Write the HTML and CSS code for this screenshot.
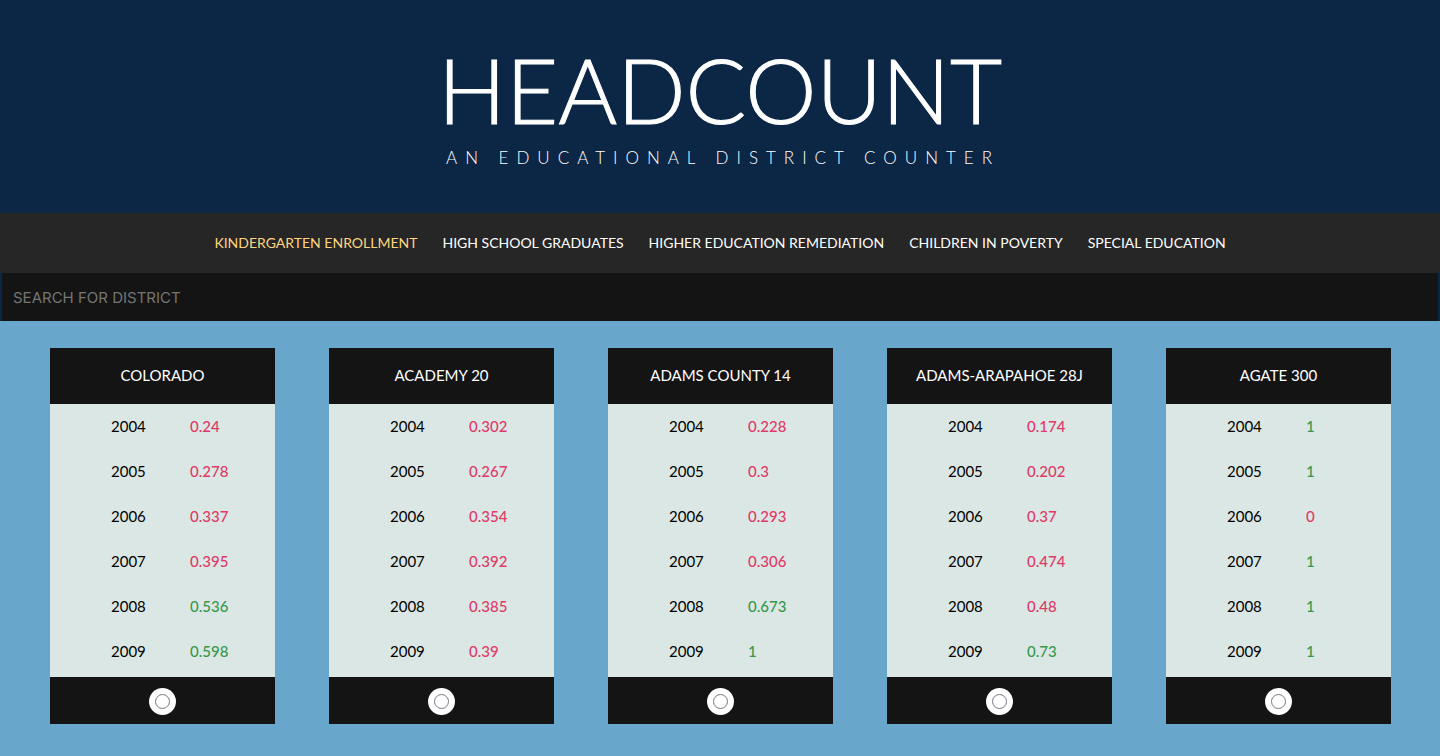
FILE: index.html
```html
<!DOCTYPE html>
<html lang="en">
<head>
<meta charset="utf-8">
<title>Headcount</title>
<link rel="stylesheet" href="styles.css">
</head>
<body>
<header class="hero">
  <div class="brand">
    <h1 class="title">HEADCOUNT</h1>
    <p class="tagline">AN EDUCATIONAL DISTRICT COUNTER</p>
  </div>
</header>
<nav class="nav">
  <button class="tab active" type="button">KINDERGARTEN ENROLLMENT</button>
  <button class="tab" type="button">HIGH SCHOOL GRADUATES</button>
  <button class="tab" type="button">HIGHER EDUCATION REMEDIATION</button>
  <button class="tab" type="button">CHILDREN IN POVERTY</button>
  <button class="tab" type="button">SPECIAL EDUCATION</button>
</nav>
<form class="search"><input class="field" type="text" aria-label="Search for district" placeholder="SEARCH FOR DISTRICT"></form>
<main class="cards" id="cards"></main>
<script src="app.js"></script>
</body>
</html>
```
FILE: app.js
```js
const districts = [
  ["COLORADO", [0.24, 0.278, 0.337, 0.395, 0.536, 0.598]],
  ["ACADEMY 20", [0.302, 0.267, 0.354, 0.392, 0.385, 0.39]],
  ["ADAMS COUNTY 14", [0.228, 0.3, 0.293, 0.306, 0.673, 1]],
  ["ADAMS-ARAPAHOE 28J", [0.174, 0.202, 0.37, 0.474, 0.48, 0.73]],
  ["AGATE 300", [1, 1, 0, 1, 1, 1]]
];
document.getElementById("cards").innerHTML = districts.map(([name, values]) => `
  <article class="card">
    <h2 class="name">${name}</h2>
    <table class="data"><tbody>${values.map((v, i) => `
      <tr><th scope="row">${2004 + i}</th><td class="${v >= 0.5 ? "high" : "low"}">${v}</td></tr>`).join("")}
    </tbody></table>
    <div class="foot"><button class="pick" type="button" aria-label="Compare ${name}"></button></div>
  </article>`).join("");
```
FILE: styles.css
```css
* { box-sizing: border-box; }
body {
  margin: 0;
  min-height: 100vh;
  background: #69a6cb;
  font-family: Lato, "Liberation Sans", sans-serif;
}
.hero {
  display: flex;
  justify-content: center;
  padding: 34px 0 41px;
  background: #0c2646;
  color: #fff;
}
.title {
  margin: 0;
  font-size: 90px;
  line-height: 110px;
  font-weight: 300;
  text-align: center;
  -webkit-text-stroke: 1px #fff;
}
.tagline {
  margin: 0;
  padding-left: 8px;
  font-size: 17px;
  line-height: 28px;
  letter-spacing: 8px;
  font-weight: 300;
}
.nav {
  display: flex;
  flex-wrap: wrap;
  justify-content: center;
  gap: 25px;
  padding: 18px;
  background: #262626;
}
.tab {
  padding: 0;
  border: 0;
  background: none;
  color: #fff;
  font: 14px/24px Lato, sans-serif;
}
.tab.active { color: #ffd47f; }
.search { padding: 0 2px; background: #0c2646; }
.field {
  display: block;
  width: 100%;
  height: 48px;
  padding: 0 11px;
  border: 0;
  background: #141414;
  color: #fff;
  font: 15px/24px Inter, sans-serif;
}
.field::placeholder { color: #757575; }
.cards {
  display: flex;
  flex-wrap: wrap;
  justify-content: space-between;
  padding: 27px 49px 32px 50px;
}
.card { width: 225px; background: #dbe7e4; }
.name {
  margin: 0;
  padding-bottom: 2px;
  background: #141414;
  color: #fff;
  text-align: center;
  font-size: 15px;
  line-height: 54px;
  font-weight: 400;
}
.data {
  width: 100%;
  border-collapse: collapse;
  table-layout: fixed;
  margin-bottom: 3px;
  color: #000;
  font-size: 15px;
}
.data th, .data td { height: 45px; padding: 0 0 2px; text-align: left; font-weight: 400; }
.data th { width: 140px; padding-left: 61px; }
.data td { font-weight: 500; }
.data .low { color: #df3a68; }
.data .high { color: #37984c; }
.foot { display: flex; justify-content: center; padding: 11px 0 9px; background: #141414; }
.pick {
  display: grid;
  place-items: center;
  width: 27px;
  height: 27px;
  padding: 0;
  border: 0;
  border-radius: 50%;
  background: #fff;
}
.pick::before {
  content: "";
  box-sizing: border-box;
  width: 15px;
  height: 15px;
  border: 1px solid #777583;
  border-radius: 50%;
}
```
